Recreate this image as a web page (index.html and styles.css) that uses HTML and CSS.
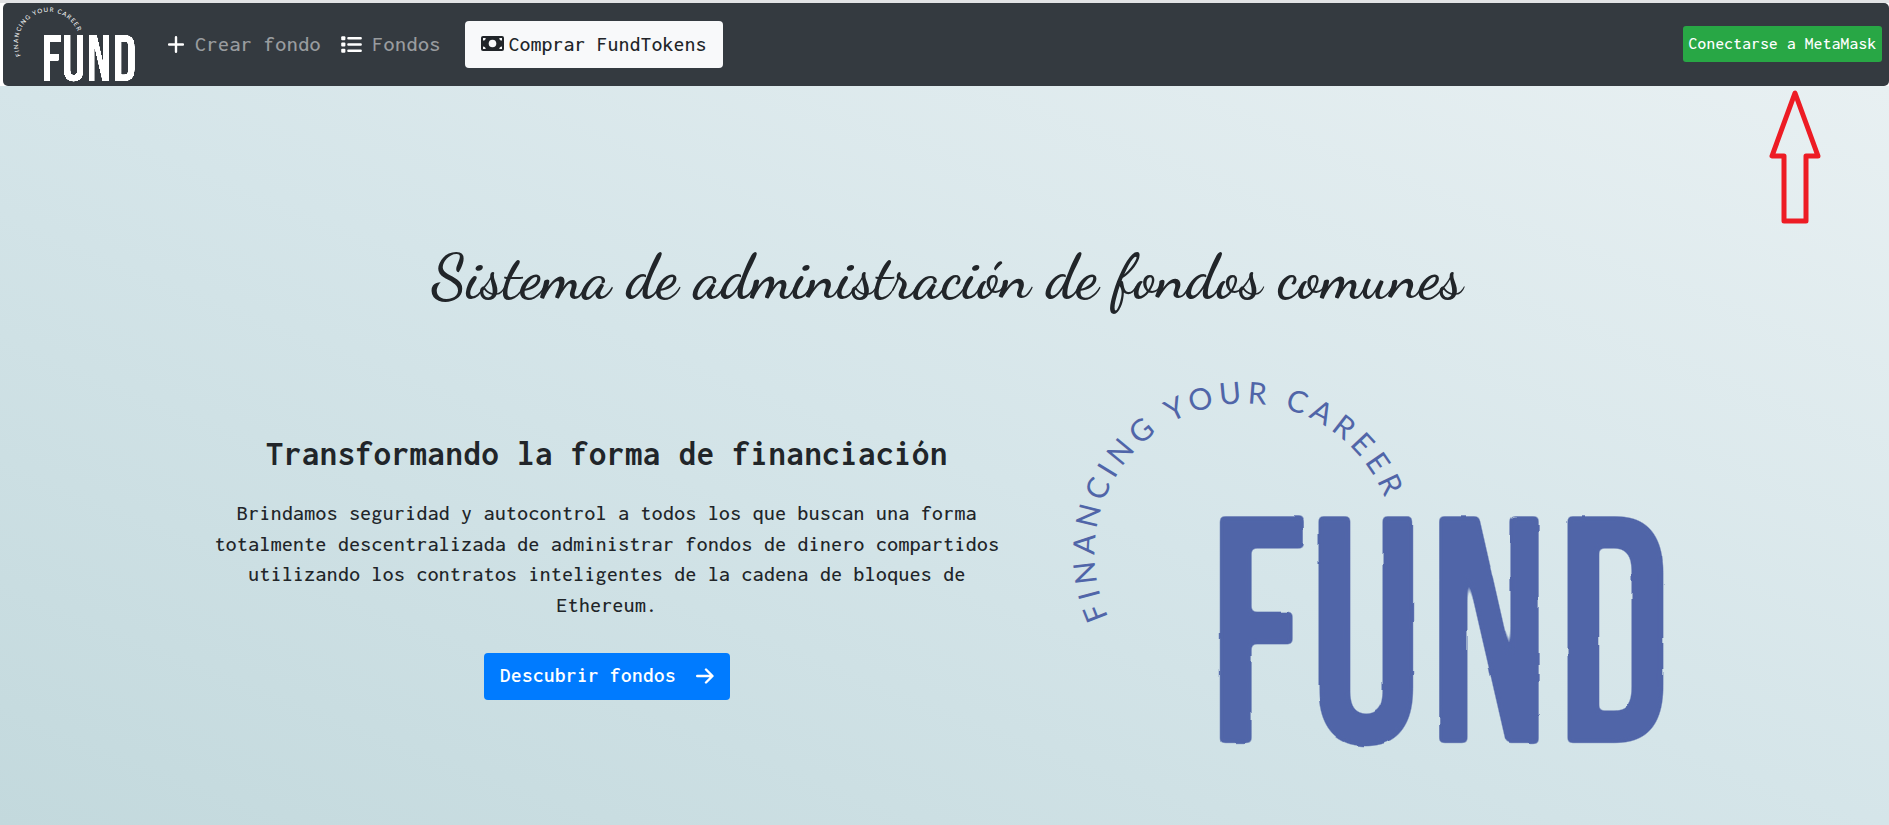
FILE: index.html
```html
<!DOCTYPE html>
<html lang="es">
<head>
<meta charset="utf-8">
<title>FUND</title>
<link rel="stylesheet" href="styles.css">
</head>
<body>
<svg class="defs" width="0" height="0">
  <defs>
    <path id="arc" d="M1108.4 617.1A150.5 150.5 0 1 1 1395.5 554"/>
    <filter id="stamp" filterUnits="userSpaceOnUse" x="1200" y="490" width="490" height="280" color-interpolation-filters="sRGB">
      <feGaussianBlur stdDeviation="2.5"/>
      <feComponentTransfer result="soft"><feFuncA type="linear" slope="5" intercept="-2"/></feComponentTransfer>
      <feTurbulence type="fractalNoise" baseFrequency=".04" numOctaves="2" seed="4" result="noise"/>
      <feDisplacementMap in="soft" in2="noise" scale="2.5" xChannelSelector="R" yChannelSelector="G"/>
    </filter>
  </defs>
</svg>

<header class="navbar">
  <svg class="brand" viewBox="1060 360 620 400">
    <text class="motto"><textPath href="#arc" textLength="480">FINANCING YOUR CAREER</textPath></text>
    <g filter="url(#stamp)"><text class="word" transform="scale(.89 1)" x="1357.4 1469.5 1603.8 1748" y="743">FUND</text></g>
  </svg>
  <nav class="links">
    <a class="link create"><svg class="icon-plus" viewBox="0 0 16 17"><path d="M8 1.2v14.6M1 8.5h14"/></svg><span>Crear fondo</span></a>
    <a class="link list"><svg class="icon-list" viewBox="0 0 21 17"><path class="bars" d="M7.4 2.2h12.3M7.4 8.5h12.3M7.4 14.8h12.3"/><rect x=".2" y=".2" width="4.2" height="4" rx="1"/><rect x=".2" y="6.5" width="4.2" height="4" rx="1"/><rect x=".2" y="12.8" width="4.2" height="4" rx="1"/></svg><span>Fondos</span></a>
    <a class="buy"><svg class="icon-money" viewBox="0 0 23 15"><rect width="23" height="15" rx="2"/><circle cx="11.5" cy="7.5" r="3.8"/><path d="M2 4.6V2h2.7A2.7 2.7 0 0 1 2 4.6zM21 4.6V2h-2.7A2.7 2.7 0 0 0 21 4.6zM2 10.4V13h2.7A2.7 2.7 0 0 0 2 10.4zM21 10.4V13h-2.7a2.7 2.7 0 0 1 2.7-2.6z"/></svg><span>Comprar FundTokens</span></a>
  </nav>
  <button class="connect">Conectarse a MetaMask</button>
</header>

<main class="hero">
  <h1 class="title">Sistema de administración de fondos comunes</h1>
  <div class="columns">
    <section class="pitch">
      <h2 class="subtitle">Transformando la forma de financiación</h2>
      <p class="lead">Brindamos seguridad y autocontrol a todos los que buscan una forma<br>totalmente descentralizada de administrar fondos de dinero compartidos<br>utilizando los contratos inteligentes de la cadena de bloques de<br>Ethereum.</p>
      <a class="discover"><span>Descubrir fondos</span><svg class="icon-arrow" viewBox="0 0 18 16"><path d="M1.2 8h15M10 1.5 16.5 8 10 14.5"/></svg></a>
    </section>
    <svg class="logo" viewBox="1060 360 620 400">
      <text class="motto"><textPath href="#arc" textLength="480">FINANCING YOUR CAREER</textPath></text>
      <g filter="url(#stamp)"><text class="word" transform="scale(.89 1)" x="1357.4 1469.5 1603.8 1748" y="743">FUND</text></g>
    </svg>
  </div>
</main>
<svg class="pointer" viewBox="0 0 56 140"><path d="M28 8 5 71h12v65h22V71h12z"/></svg>
</body>
</html>
```
FILE: styles.css
```css
* { box-sizing: border-box; }
body {
  margin: 0;
  width: 1889px;
  height: 825px;
  overflow: hidden;
  position: relative;
  background: #fff;
  border-top: 3px solid #e2e3e5;
  color: #212529;
  font-family: Inconsolata, "DejaVu Sans Mono", monospace;
  font-weight: 500;
}
.defs { position: absolute; }
svg { display: block; flex: none; }

.navbar {
  height: 83px;
  margin-left: 3px;
  padding: 0 7px 0 8px;
  display: flex;
  align-items: center;
  background: #343a40;
  border-radius: 5px;
}
.brand { width: 127px; height: 82px; margin-bottom: 2px; fill: #fff; }
.links { display: flex; align-items: center; margin-left: 30px; }
.link { display: flex; align-items: center; color: #999c9f; font-size: 22px; letter-spacing: .46px; }
.links span { margin-bottom: 2px; }
.icon-plus { width: 16px; height: 17px; margin-right: 11px; fill: none; stroke: #fff; stroke-width: 2.4; stroke-linecap: round; }
.list { margin-left: 20px; }
.icon-list { width: 21px; height: 17px; margin-right: 10px; fill: #fff; }
.icon-list .bars { fill: none; stroke: #fff; stroke-width: 2.4; stroke-linecap: round; }
.buy {
  width: 258px;
  height: 47px;
  margin-left: 24px;
  padding-left: 16px;
  display: flex;
  align-items: center;
  background: #f8f9fa;
  border-radius: 4px;
  font-size: 21px;
  letter-spacing: .5px;
}
.icon-money { width: 23px; height: 15px; margin: 0 5px 2px 0; fill: #212529; }
.icon-money circle, .icon-money path { fill: #f8f9fa; }
.connect {
  width: 199px;
  height: 36px;
  margin: 0 0 2px auto;
  padding: 0 0 1px;
  border: 0;
  border-radius: 3px;
  background: #28a745;
  color: #fff;
  font-family: inherit;
  font-weight: 500;
  font-size: 17.2px;
  letter-spacing: .35px;
}

.hero {
  height: 739px;
  padding-top: 153px;
  background: linear-gradient(to top right, #c3d9dd, #d5e5e9 50%, #e8f0f2);
}
.title {
  margin: 0 0 0 5px;
  height: 80px;
  text-align: center;
  font: 600 62.4px/76px "Dancing Script", "Liberation Serif", serif;
  white-space: nowrap;
}
.columns { display: flex; margin-top: 41px; }
.pitch { width: 786px; margin-left: 214px; padding-top: 73px; text-align: center; }
.subtitle { margin: 0; font-size: 34.4px; line-height: 41px; letter-spacing: .75px; white-space: nowrap; }
.lead { margin: 24px 0 0; font-size: 21.5px; line-height: 30.7px; letter-spacing: .46px; white-space: nowrap; }
.discover {
  width: 246px;
  height: 47px;
  margin: 32px auto 0;
  padding: 0 16px;
  display: flex;
  align-items: center;
  justify-content: space-between;
  background: #007bff;
  border-radius: 4px;
  color: #fff;
  font-size: 21px;
  font-weight: 600;
  letter-spacing: .5px;
}
.discover span { margin-bottom: 2px; }
.icon-arrow { width: 18px; height: 16px; fill: none; stroke: #fff; stroke-width: 2.4; stroke-linecap: round; stroke-linejoin: round; }
.logo { width: 620px; height: 400px; margin-left: 60px; fill: #5065a8; }
.motto { font: 400 30px Lato, sans-serif; }
.word { font: 400 324px "Bebas Neue", "Liberation Sans", sans-serif; }
.pointer { position: absolute; left: 1767px; top: 82px; width: 56px; height: 140px; fill: none; stroke: #ed1c24; stroke-width: 5; stroke-linejoin: round; }
```
